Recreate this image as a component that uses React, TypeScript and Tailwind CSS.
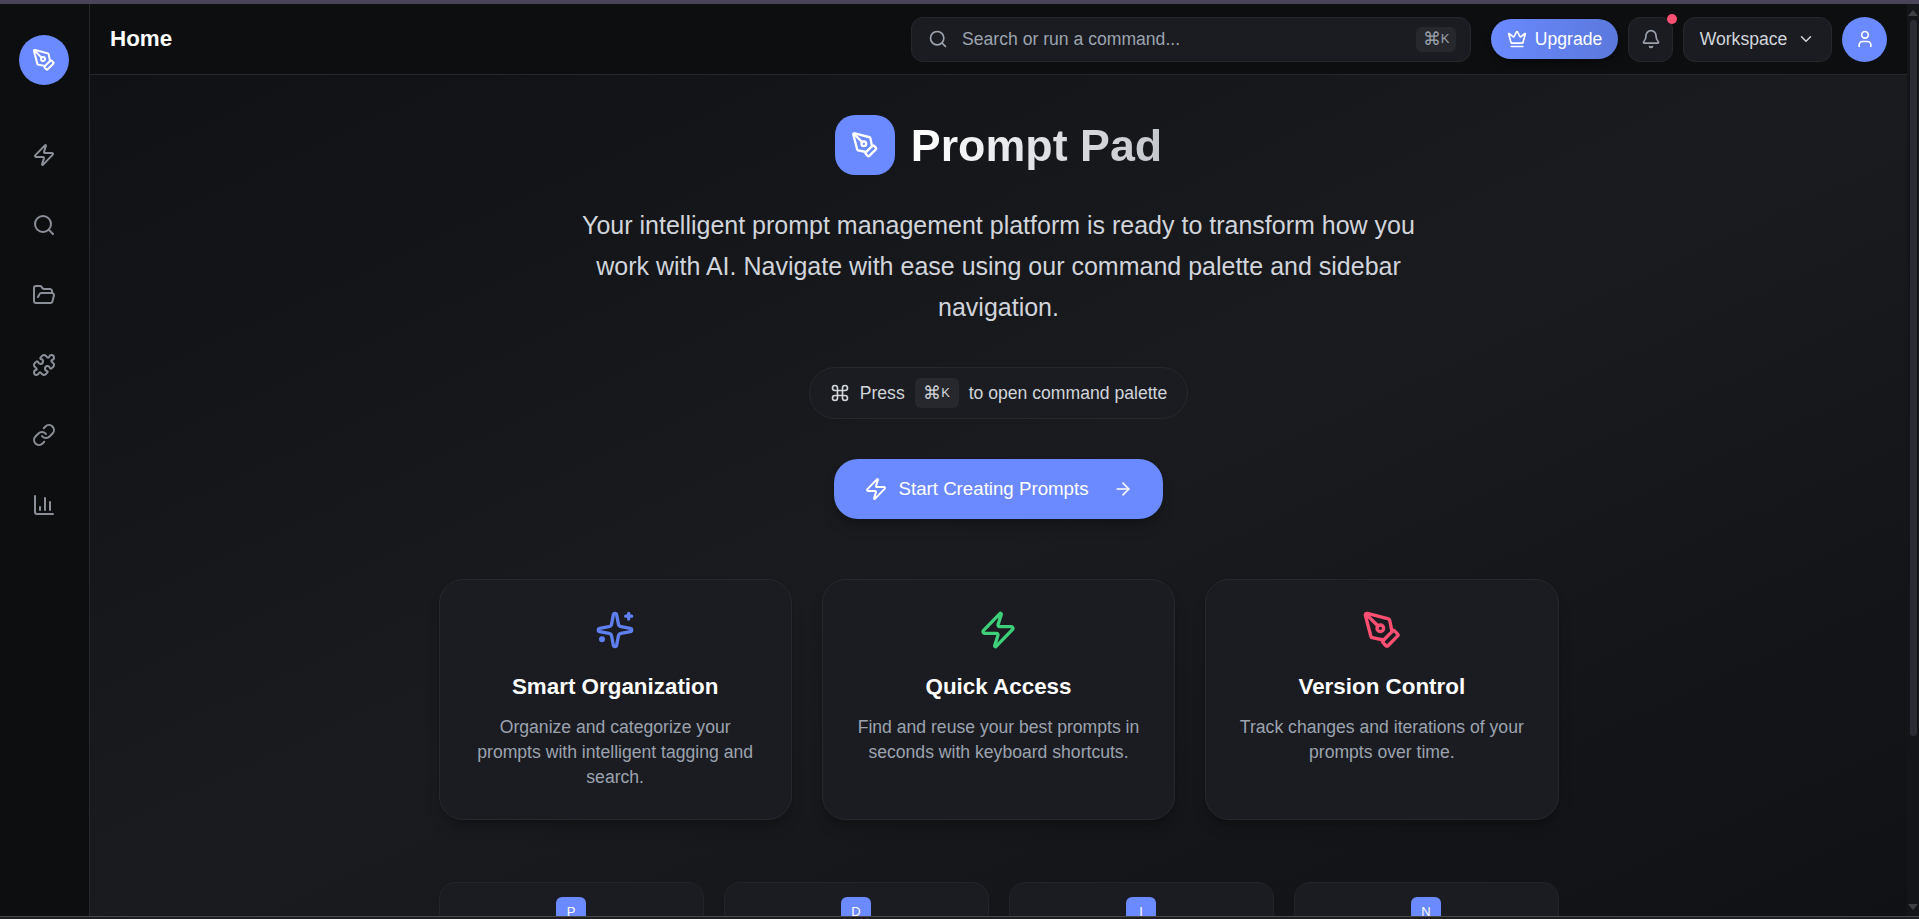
import { BarChart3, ChevronDown, Crown, Bell, Command, ArrowRight, FolderOpen, Link, PenTool, Puzzle, Search, User, Zap } from 'lucide-react';

const navIcons = [Zap, Search, FolderOpen, Puzzle, Link, BarChart3];

function SparkleIcon({ className }: { className: string }) {
  return (
    <svg viewBox="0 0 24 24" fill="none" stroke="currentColor" strokeWidth="2" strokeLinecap="round" strokeLinejoin="round" className={className}>
      <path d="M11.017 2.814a1 1 0 0 1 1.966 0l1.051 5.558a2 2 0 0 0 1.594 1.594l5.558 1.051a1 1 0 0 1 0 1.966l-5.558 1.051a2 2 0 0 0-1.594 1.594l-1.051 5.558a1 1 0 0 1-1.966 0l-1.051-5.558a2 2 0 0 0-1.594-1.594l-5.558-1.051a1 1 0 0 1 0-1.966l5.558-1.051a2 2 0 0 0 1.594-1.594z" />
      <path d="M20.2 2v3.4M22 3.7h-3.6" />
      <circle cx="4.2" cy="17.6" r="0.8" fill="currentColor" />
    </svg>
  );
}

const features = [
  {
    icon: <SparkleIcon className="h-10 w-10 text-[#5f7ff0]" />,
    title: 'Smart Organization',
    text: 'Organize and categorize your prompts with intelligent tagging and search.',
  },
  {
    icon: <Zap className="h-10 w-10 text-[#3ecf7a]" />,
    title: 'Quick Access',
    text: 'Find and reuse your best prompts in seconds with keyboard shortcuts.',
  },
  {
    icon: <PenTool className="h-10 w-10 text-[#ff4f73]" />,
    title: 'Version Control',
    text: 'Track changes and iterations of your prompts over time.',
  },
];

const steps = ['P', 'D', 'I', 'N'];

function Kbd({ className }: { className: string }) {
  return (
    <kbd className={`flex items-center justify-center rounded-md bg-[#27282d] font-['Liberation_Sans',sans-serif] ${className}`}>
      ⌘<span className="text-[13px]">K</span>
    </kbd>
  );
}

export default function App() {
  return (
    <div className="flex h-screen w-screen flex-col overflow-hidden bg-[#0d0d10] font-['Liberation_Sans',sans-serif] text-white">
      <div className="h-1 shrink-0 bg-[#4a4458]" />

      <div className="flex min-h-0 flex-1">
        {/* sidebar */}
        <aside className="flex w-[90px] shrink-0 flex-col items-center border-r border-[#27282d] bg-[#0d0e10] pr-px">
          <div className="mt-[31px] flex h-[50px] w-[50px] items-center justify-center rounded-full bg-[#6b8aff]">
            <PenTool className="h-6 w-6 text-white" />
          </div>
          <nav className="mt-[58px] flex flex-col gap-[46px]">
            {navIcons.map((Icon, i) => (
              <Icon key={i} className="h-6 w-6 text-[#8b8f98]" />
            ))}
          </nav>
        </aside>

        <div className="flex min-w-0 flex-1 flex-col">
          {/* top bar */}
          <header className="flex h-[71px] shrink-0 items-center border-b border-[#27282d] bg-[#0d0e10] pl-5 pr-5">
            <h1 className="text-[22.4px] font-bold">Home</h1>
            <div className="ml-auto flex h-[45px] w-[560px] items-center rounded-xl border border-[#27282d] bg-[#1b1c21] pl-4 pr-[14px] text-[#9ca3af]">
              <Search className="h-5 w-5" />
              <span className="ml-[14px] text-[17.6px]">Search or run a command...</span>
              <Kbd className="ml-auto h-[25px] w-10 text-[17.6px]" />
            </div>
            <button className="ml-5 flex h-10 w-[127px] items-center justify-center gap-2 rounded-[20px] bg-gradient-to-r from-[#6b8aff] to-[#5a78dc] text-[17.6px] font-medium shadow-md shadow-black/30">
              <Crown className="h-5 w-5" />
              Upgrade
            </button>
            <button className="relative ml-[10px] flex h-[45px] w-[45px] items-center justify-center rounded-xl border border-[#27282d] bg-[#1b1c21] text-[#9ca3af]">
              <Bell className="h-5 w-5" />
              <span className="absolute -right-[5px] -top-[4px] h-[10px] w-[10px] rounded-full bg-[#ff4f73]" />
            </button>
            <button className="ml-[10px] flex h-[45px] w-[149px] items-center justify-center gap-[10px] rounded-xl border border-[#27282d] bg-[#1b1c21] text-[17.6px] text-[#d1d5db]">
              Workspace
              <ChevronDown className="h-[18px] w-[18px]" />
            </button>
            <div className="ml-[10px] flex h-[45px] w-[45px] items-center justify-center rounded-full bg-[#6b8aff]">
              <User className="h-5 w-5" />
            </div>
          </header>

          {/* scrolled page */}
          <main className="min-h-0 flex-1 overflow-hidden bg-gradient-to-br from-[#101114] via-[#1a1b1f] to-[#101114]">
            <div className="mx-auto flex w-[1120px] flex-col items-center pt-10">
              <div className="flex items-center gap-4">
                <div className="flex h-[60px] w-[60px] items-center justify-center rounded-[20px] bg-[#6b8aff]">
                  <PenTool className="h-7 w-7 text-white" />
                </div>
                <h2 className="bg-gradient-to-r from-white to-[#c4c7cd] bg-clip-text text-[44.8px] font-bold leading-[60px] text-transparent">Prompt Pad</h2>
              </div>

              <p className="mt-[30px] w-[860px] text-center text-[25px] leading-[41px] text-[#d1d5db]">
                Your intelligent prompt management platform is ready to transform how you work with AI. Navigate with ease using our command palette and sidebar navigation.
              </p>

              <div className="mt-[39px] flex h-[52px] items-center gap-[10px] rounded-full border border-[#27282d] bg-[#1b1c21] px-5 text-[17.6px] text-[#d1d5db]">
                <Command className="h-5 w-5" />
                Press
                <Kbd className="h-[30px] w-11 text-[17.6px]" />
                to open command palette
              </div>

              <button className="mt-10 flex h-[60px] w-[329px] items-center justify-center rounded-[24px] bg-[#6b8aff] text-[18.7px] shadow-lg shadow-black/20">
                <Zap className="h-6 w-6" />
                <span className="ml-[10px]">Start Creating Prompts</span>
                <ArrowRight className="ml-6 h-5 w-5" />
              </button>

              <div className="mt-[60px] grid w-full grid-cols-3 gap-[30px]">
                {features.map((f) => (
                  <div key={f.title} className="flex h-[241px] flex-col items-center rounded-[24px] border border-[#27282d] bg-[#1b1c21] px-[30px] pt-[30px] text-center shadow-lg shadow-black/20">
                    {f.icon}
                    <h3 className="mt-5 text-[22.4px] font-bold">{f.title}</h3>
                    <p className="mt-[11px] text-[17.6px] leading-[25px] text-[#9ca3af]">{f.text}</p>
                  </div>
                ))}
              </div>

              <div className="mt-[62px] grid w-full grid-cols-4 gap-5">
                {steps.map((s) => (
                  <div key={s} className="flex h-[120px] flex-col items-center rounded-2xl border border-[#232429] bg-[#1b1c21] pt-[14px]">
                    <div className="flex h-[30px] w-[30px] items-center justify-center rounded-md bg-[#6b8aff] text-[13px]">{s}</div>
                  </div>
                ))}
              </div>
            </div>
          </main>
        </div>

        {/* window scrollbar */}
        <div className="flex w-3 shrink-0 flex-col items-center bg-[#141518]">
          <div className="mt-[6px] h-0 w-0 border-x-[5px] border-b-[6px] border-x-transparent border-b-[#3f4046]" />
          <div className="mt-[4px] h-[716px] w-[7px] rounded-full bg-[#2b2c33]" />
          <div className="mt-auto mb-[6px] h-0 w-0 border-x-[5px] border-t-[6px] border-x-transparent border-t-[#3f4046]" />
        </div>
      </div>

      <div className="h-[3px] shrink-0 border-t border-[#4a4a4e] bg-[#1f1f22]" />
    </div>
  );
}
